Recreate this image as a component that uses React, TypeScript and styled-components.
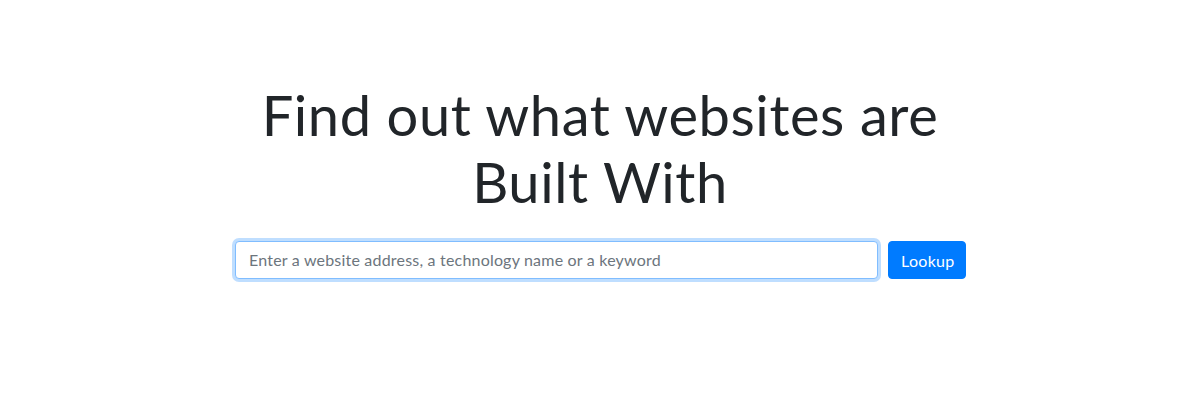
import styled, { createGlobalStyle } from "styled-components";
import { useState } from "react";

const GlobalStyle = createGlobalStyle`
  html, body {
    margin: 0;
    padding: 0;
    background: #fff;
  }
  body {
    font-family: Lato, "Noto Sans", sans-serif;
    color: #212529;
  }
  * {
    box-sizing: border-box;
  }
`;

const Page = styled.div`
  width: 100%;
  height: 401px;
  overflow: hidden;
`;

const Container = styled.div`
  width: 1140px;
  margin: 0 auto;
  padding: 81px 15px 0;
  display: flex;
  flex-direction: column;
  align-items: center;
`;

const Title = styled.h1`
  margin: 0 0 26px;
  font-family: Lato, "Noto Sans", sans-serif;
  font-size: 56px;
  font-weight: 400;
  letter-spacing: 0.6px;
  line-height: 1.2;
  text-align: center;
  color: #212529;
`;

const SearchForm = styled.form`
  width: 731px;
  margin-left: 1px;
  display: flex;
  gap: 10px;
`;

const SearchInput = styled.input`
  flex: 1;
  height: 38px;
  padding: 6px 12px 7px 13px;
  font-family: Lato, "Noto Sans", sans-serif;
  font-size: 16px;
  letter-spacing: 0.2px;
  color: #495057;
  background: #fff;
  border: 1px solid #80bdff;
  border-radius: 4px;
  outline: none;
  box-shadow: 0 0 0 3px rgba(0, 123, 255, 0.25);

  &::placeholder {
    color: #6c757d;
  }
`;

const LookupButton = styled.button`
  width: 78px;
  height: 38px;
  padding: 6px 12px;
  font-family: Lato, "Noto Sans", sans-serif;
  font-size: 16px;
  letter-spacing: 0.3px;
  color: #fff;
  background: #007bff;
  border: 1px solid #007bff;
  border-radius: 4px;
  cursor: pointer;
`;

function App() {
  const [query, setQuery] = useState("");
  return (
    <Page>
      <GlobalStyle />
      <Container>
        <Title>
          Find out what websites are
          <br />
          Built With
        </Title>
        <SearchForm onSubmit={(e) => e.preventDefault()}>
          <SearchInput
            autoFocus
            value={query}
            onChange={(e) => setQuery(e.target.value)}
            placeholder="Enter a website address, a technology name or a keyword"
          />
          <LookupButton type="submit">Lookup</LookupButton>
        </SearchForm>
      </Container>
    </Page>
  );
}

export default App;
